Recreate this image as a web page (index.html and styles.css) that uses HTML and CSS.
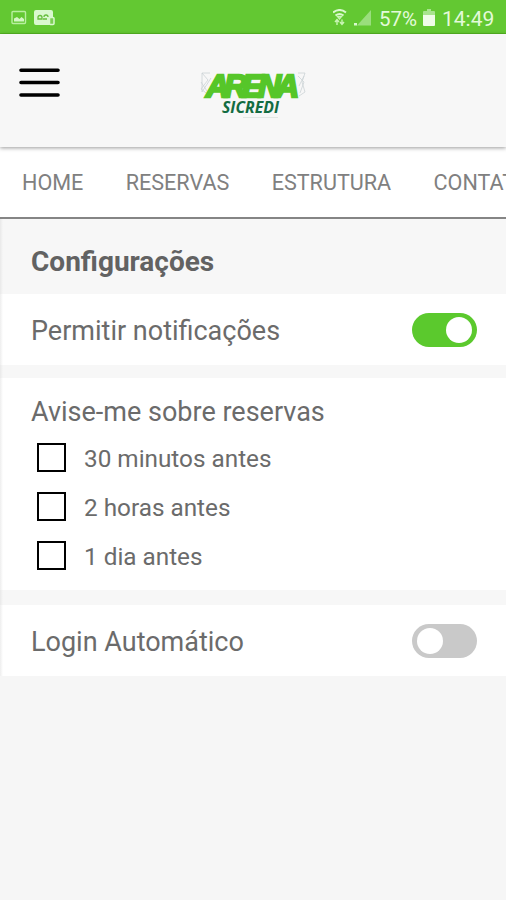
FILE: index.html
```html
<!DOCTYPE html>
<html lang="pt-BR">
<head>
<meta charset="utf-8">
<title>Arena Sicredi - Configurações</title>
<link rel="stylesheet" href="styles.css">
</head>
<body>
<div class="status">
  <svg class="status-left" width="50" height="20" viewBox="0 0 50 20">
    <rect x="1" y="2.500" width="13.500" height="12" rx="1" fill="none" stroke="#b9efa0" stroke-width="1.400"/>
    <path d="M3 12.500V9.500l3-1.500 2.500 2 2-2 2.500 2v2.500z" fill="#d4f7c5"/>
    <path d="M25 1h15q2 0 2 2v6h-3v7H25q-2 0-2-2V3q0-2 2-2z" fill="#d9f8ce"/>
    <path d="M27 10V8.500a2 2 0 0 1 4 0V10zM33 8a2 2 0 1 1 4 0M32 10h4" fill="none" stroke="#67bd3d" stroke-width="1.300"/>
    <rect x="38.500" y="8.500" width="4.500" height="7" rx="1" fill="#7bcf52" stroke="#d9f8ce" stroke-width="1.500"/>
  </svg>
  <div class="status-right">
    <svg width="40" height="20" viewBox="0 0 40 20">
      <path d="M0 3.500q6.500-5 13 0M2.500 6.500q4-3 8 0" fill="none" stroke="#d9f8ce" stroke-width="2"/>
      <path d="M4.500 7.500h4l-2 2.500zM2 13l2-2.500 2 2.500M4 10.500v5.500M7 13l2 2.500 2-2.500M9 15.500v-5" fill="none" stroke="#c9f5b5" stroke-width="1.400"/>
      <path d="M38 1v15.500H24z" fill="#9ade7d"/>
      <path d="M21 14h3v2.500h-3z" fill="#d9f8ce"/>
    </svg>
    <span class="percent">57%</span>
    <svg class="battery" width="12" height="18" viewBox="0 0 12 18">
      <path d="M4 0h4v2h3q1 0 1 1v4H0V3q0-1 1-1h3z" fill="#a8e48e"/>
      <path d="M0 6h12v10q0 1-1 1H1q-1 0-1-1z" fill="#effce8"/>
    </svg>
    <span class="clock">14:49</span>
  </div>
</div>
<header class="header">
  <svg class="menu" width="41" height="30" viewBox="0 0 41 30">
    <path d="M2 2.200h37M2 14.500h37M2 27h37" stroke="#000" stroke-width="3.600" stroke-linecap="round"/>
  </svg>
  <svg class="logo" width="108" height="50" viewBox="0 0 108 50">
    <path d="M10 4H2l6 7-7 9 9 7M2 4v19l9-14M1 13l8 12M98 4h7l-3 9 3 10-6 4M98 7l6 6-4 11M99 17l5-10" fill="none" stroke="#cbd3d5" stroke-width=".8"/>
    <text class="arena" x="6" y="27.800" textLength="93" lengthAdjust="spacing">ARENA</text>
    <text class="sicredi" x="22" y="44" textLength="57" lengthAdjust="spacingAndGlyphs">SICREDI</text>
    <path d="M43 48.500h35" stroke="#e1e7e3" stroke-width="1"/>
  </svg>
</header>
<nav class="tabs"><a>HOME</a><a>RESERVAS</a><a>ESTRUTURA</a><a>CONTATO</a></nav>
<main class="content">
  <h1 class="title">Configurações</h1>
  <section class="row"><span>Permitir notificações</span><i class="switch on"></i></section>
  <section class="alerts">
    <h2>Avise-me sobre reservas</h2>
    <label class="option"><i class="box"></i><span>30 minutos antes</span></label>
    <label class="option"><i class="box"></i><span>2 horas antes</span></label>
    <label class="option"><i class="box"></i><span>1 dia antes</span></label>
  </section>
  <section class="row"><span>Login Automático</span><i class="switch"></i></section>
</main>
</body>
</html>
```
FILE: styles.css
```css
* { box-sizing: border-box; }
body {
  margin: 0;
  height: 900px;
  overflow: hidden;
  background: #f6f6f6;
  color: #6b6b6b;
  font-family: Roboto, "Liberation Sans", sans-serif;
}
.status {
  height: 34px;
  background: #63c832;
  border-bottom: 1px solid #55b822;
  display: flex;
  justify-content: space-between;
  align-items: flex-start;
  padding: 9px 11px 0 11px;
  color: #e3fad9;
  font-size: 20.5px;
  line-height: 20px;
}
.status-right { display: flex; }
.status-right svg { flex: none; }
.percent { width: 40px; margin-left: 6px; }
.battery { margin: 0 7px 0 4px; }
.clock { width: 53px; font-size: 21px; }
.header {
  position: relative;
  height: 113px;
  padding: 34px 0 0 19px;
  display: flex;
  align-items: flex-start;
  background: #f7f7f7;
  box-shadow: 0 1px 4px rgba(0, 0, 0, .4);
}
.logo { margin: 1px 0 0 140px; }
.arena {
  font: italic 700 32px "Liberation Sans", sans-serif;
  fill: #56c629;
  stroke: #56c629;
  stroke-width: 2.4px;
}
.sicredi {
  font: italic 700 15.5px "Open Sans", sans-serif;
  fill: #136c42;
}
.tabs {
  height: 72px;
  padding: 2px 0 2px 22px;
  display: flex;
  align-items: center;
  gap: 42.3px;
  overflow: hidden;
  white-space: nowrap;
  background: #fff;
  border-bottom: 2px solid #858585;
  color: #808080;
  font-size: 21.6px;
}
.content { background: linear-gradient(90deg, #e9e9e9, #f7f7f7 3px); }
.title {
  height: 75px;
  margin: 0;
  padding-left: 31px;
  font-size: 28px;
  line-height: 86px;
  font-weight: 700;
  color: #626262;
}
.row {
  height: 71px;
  padding: 0 29px 0 31px;
  display: flex;
  align-items: center;
  justify-content: space-between;
  font-size: 27px;
}
.row span { padding-top: 2px; }
.row, .alerts { background: linear-gradient(90deg, #eee, #fff 3px); }
.switch {
  width: 65px;
  height: 34px;
  padding: 4px 5px;
  display: flex;
  border-radius: 17px;
  background: #c9c9c9;
}
.switch::before {
  content: "";
  width: 26px;
  height: 26px;
  border-radius: 50%;
  background: #fff;
}
.on { justify-content: flex-end; background: #5bc92d; }
.alerts {
  height: 212px;
  margin: 13px 0 15px;
  padding: 18px 0 0 31px;
}
.alerts h2 {
  height: 37px;
  margin: 0;
  font-size: 27px;
  line-height: 33px;
  font-weight: 400;
}
.option {
  height: 49px;
  display: flex;
  align-items: center;
  padding-left: 6px;
  font-size: 24.3px;
}
.option span { padding-top: 1px; }
.box {
  width: 29px;
  height: 29px;
  margin: 0 18px 0 0;
  border: 2px solid #000;
}
```
